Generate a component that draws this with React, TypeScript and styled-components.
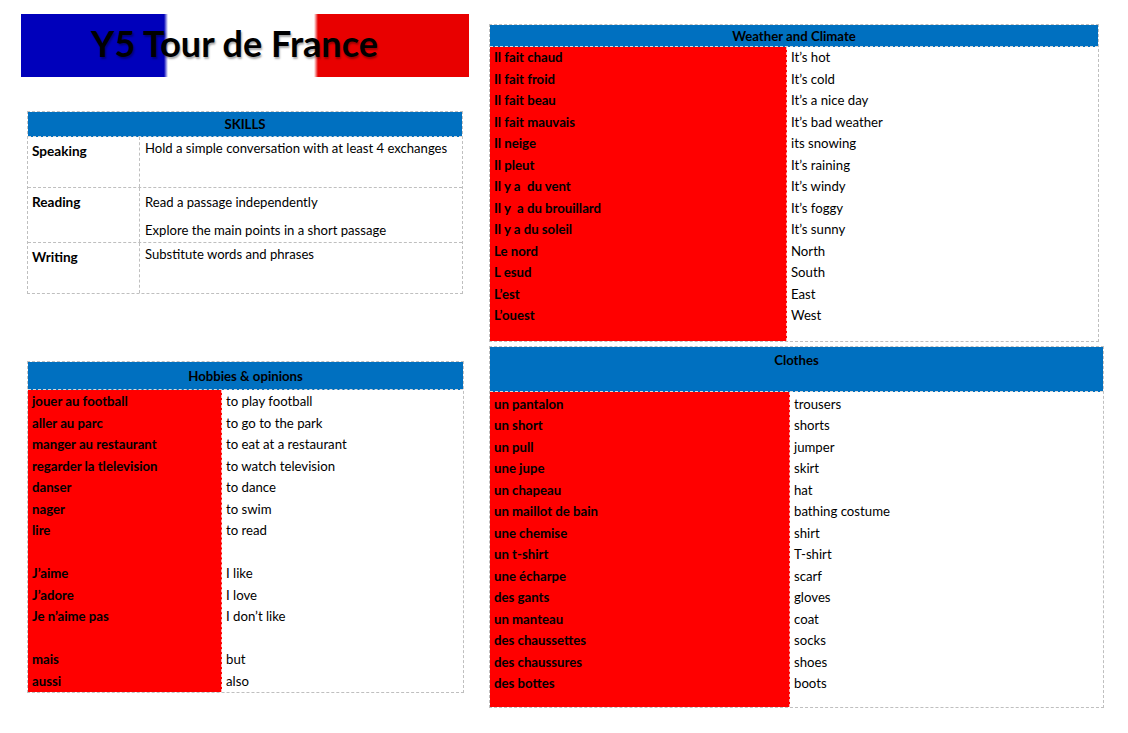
import React from 'react'
import styled, { createGlobalStyle } from 'styled-components'

const GlobalStyle = createGlobalStyle`
  body {
    margin: 0;
    background: #ffffff;
    font-family: Lato, 'Liberation Sans', sans-serif;
    color: #000000;
  }
`

const colors = {
  blue: '#0070c0',
  red: '#ff0000',
  border: '#bfbfbf',
  flagBlue: '#0000bb',
  flagRed: '#e80000'
}

type Pair = [string, string]

const hobbies: Pair[] = [
  ['jouer au football', 'to play football'],
  ['aller au parc', 'to go to the park'],
  ['manger au restaurant', 'to eat at a restaurant'],
  ['regarder la tlelevision', 'to watch television'],
  ['danser', 'to dance'],
  ['nager', 'to swim'],
  ['lire', 'to read'],
  ['', ''],
  ['J’aime', 'I like'],
  ['J’adore', 'I love'],
  ['Je n’aime pas', 'I don’t like'],
  ['', ''],
  ['mais', 'but'],
  ['aussi', 'also']
]

const weather: Pair[] = [
  ['Il fait chaud', 'It’s hot'],
  ['Il fait froid', 'It’s cold'],
  ['Il fait beau', 'It’s a nice day'],
  ['Il fait mauvais', 'It’s bad weather'],
  ['Il neige', 'its snowing'],
  ['Il pleut', 'It’s raining'],
  ['Il y a  du vent', 'It’s windy'],
  ['Il y  a du brouillard', 'It’s foggy'],
  ['Il y a du soleil', 'It’s sunny'],
  ['Le nord', 'North'],
  ['L esud', 'South'],
  ['L’est', 'East'],
  ['L’ouest', 'West']
]

const clothes: Pair[] = [
  ['un pantalon', 'trousers'],
  ['un short', 'shorts'],
  ['un pull', 'jumper'],
  ['une jupe', 'skirt'],
  ['un chapeau', 'hat'],
  ['un maillot de bain', 'bathing costume'],
  ['une chemise', 'shirt'],
  ['un t-shirt', 'T-shirt'],
  ['une écharpe', 'scarf'],
  ['des gants', 'gloves'],
  ['un manteau', 'coat'],
  ['des chaussettes', 'socks'],
  ['des chaussures', 'shoes'],
  ['des bottes', 'boots']
]

interface VocabTableProps {
  title: string
  rows: Pair[]
  width: number
  leftWidth: number
  headerHeight: number
  headerTop?: number
  bodyTop?: number
  bottomPad?: number
}

const VocabTable: React.FC<VocabTableProps> = ({ title, rows, width, leftWidth, headerHeight, headerTop, bodyTop = 0, bottomPad = 0 }) => (
  <S.Table $width={width}>
    <S.Header $height={headerHeight} $top={headerTop}>
      {title}
    </S.Header>
    <S.VocabBody $left={leftWidth}>
      <S.FrenchCol $top={bodyTop} $bottom={bottomPad}>
        {rows.map(([fr], i) => (
          <S.Cell key={`fr-${i}`}>{fr}</S.Cell>
        ))}
      </S.FrenchCol>
      <S.EnglishCol $top={bodyTop} $bottom={bottomPad}>
        {rows.map(([, en], i) => (
          <S.Cell key={`en-${i}`}>{en}</S.Cell>
        ))}
      </S.EnglishCol>
    </S.VocabBody>
  </S.Table>
)

export default function App() {
  return (
    <>
      <GlobalStyle />
      <S.Page>
        <S.LeftColumn>
          <S.Banner>
            <S.BannerTitle>Y5 Tour de France</S.BannerTitle>
          </S.Banner>

          <S.SkillsTable>
            <S.Header $height={25}>SKILLS</S.Header>
            <S.SkillRow $height={51}>
              <S.SkillLabel>Speaking</S.SkillLabel>
              <S.SkillText>
                <S.Para>Hold a simple conversation with at least 4 exchanges</S.Para>
              </S.SkillText>
            </S.SkillRow>
            <S.SkillRow $height={55}>
              <S.SkillLabel>Reading</S.SkillLabel>
              <S.SkillText $top={6}>
                <S.Para>Read a passage independently</S.Para>
                <S.Para $gap={12}>Explore the main points in a short passage</S.Para>
              </S.SkillText>
            </S.SkillRow>
            <S.SkillRow $height={50} $last>
              <S.SkillLabel>Writing</S.SkillLabel>
              <S.SkillText>
                <S.Para>Substitute words and phrases</S.Para>
              </S.SkillText>
            </S.SkillRow>
          </S.SkillsTable>

          <S.HobbiesWrap>
            <VocabTable title="Hobbies & opinions" rows={hobbies} width={437} leftWidth={194} headerHeight={28} bodyTop={1} />
          </S.HobbiesWrap>
        </S.LeftColumn>

        <S.RightColumn>
          <VocabTable title="Weather and Climate" rows={weather} width={610} leftWidth={297} headerHeight={22} bottomPad={14} />
          <S.ClothesWrap>
            <VocabTable title="Clothes" rows={clothes} width={615} leftWidth={300} headerHeight={45} headerTop={5} bodyTop={2} bottomPad={12} />
          </S.ClothesWrap>
        </S.RightColumn>
      </S.Page>
    </>
  )
}

export const S = {
  Page: styled.div`
    display: flex;
    align-items: flex-start;
    padding: 14px 0 0 21px;
    width: 1128px;
    height: 733px;
    box-sizing: border-box;
  `,
  LeftColumn: styled.div`
    width: 448px;
    display: flex;
    flex-direction: column;
  `,
  RightColumn: styled.div`
    margin-left: 20px;
    margin-top: 10px;
    display: flex;
    flex-direction: column;
  `,
  Banner: styled.div`
    height: 63px;
    display: flex;
    align-items: center;
    justify-content: center;
    padding-right: 21px;
    background: linear-gradient(
      to right,
      ${colors.flagBlue} 0,
      ${colors.flagBlue} 143px,
      #ffffff 147px,
      #ffffff 293px,
      ${colors.flagRed} 297px,
      ${colors.flagRed} 100%
    );
  `,
  BannerTitle: styled.span`
    font-family: Lato, 'Liberation Sans', sans-serif;
    font-weight: 700;
    font-size: 36px;
    line-height: 40px;
    color: #000000;
    text-shadow: 1px 2px 2px rgba(0, 0, 0, 0.35);
    margin-top: -5px;
  `,
  SkillsTable: styled.div`
    margin: 34px 0 0 6px;
    width: 436px;
    border: 1px dashed ${colors.border};
    box-sizing: border-box;
  `,
  SkillRow: styled.div<{ $height: number; $last?: boolean }>`
    display: grid;
    grid-template-columns: 112px 1fr;
    height: ${p => p.$height}px;
    border-bottom: ${p => (p.$last ? 'none' : `1px dashed ${colors.border}`)};
    box-sizing: border-box;
  `,
  SkillLabel: styled.div`
    border-right: 1px dashed ${colors.border};
    padding: 6px 0 0 4px;
    font-size: 13.6px;
    font-weight: 700;
    line-height: 16px;
  `,
  SkillText: styled.div<{ $top?: number }>`
    padding: ${p => p.$top ?? 3}px 0 0 5px;
    font-size: 13.1px;
    line-height: 16px;
  `,
  Para: styled.div<{ $gap?: number }>`
    margin-top: ${p => p.$gap ?? 0}px;
  `,
  HobbiesWrap: styled.div`
    margin: 67px 0 0 6px;
  `,
  ClothesWrap: styled.div`
    margin-top: 4px;
  `,
  Table: styled.div<{ $width: number }>`
    width: ${p => p.$width}px;
    border: 1px dashed ${colors.border};
    box-sizing: border-box;
  `,
  Header: styled.div<{ $height: number; $top?: number }>`
    height: ${p => p.$height}px;
    background: ${colors.blue};
    border-bottom: 1px dashed #d9d9d9;
    box-sizing: border-box;
    display: flex;
    justify-content: center;
    align-items: ${p => (p.$top !== undefined ? 'flex-start' : 'center')};
    padding-top: ${p => p.$top ?? 0}px;
    font-size: 13.2px;
    font-weight: 700;
    line-height: 16px;
  `,
  VocabBody: styled.div<{ $left: number }>`
    display: grid;
    grid-template-columns: ${p => p.$left}px 1fr;
  `,
  FrenchCol: styled.div<{ $top: number; $bottom: number }>`
    background: ${colors.red};
    border-right: 1px dashed #ffb3b3;
    padding: ${p => p.$top}px 0 ${p => p.$bottom}px 4px;
    font-weight: 700;
  `,
  EnglishCol: styled.div<{ $top: number; $bottom: number }>`
    padding: ${p => p.$top}px 0 ${p => p.$bottom}px 4px;
  `,
  Cell: styled.div`
    height: 21.5px;
    line-height: 21.5px;
    font-size: 13.2px;
    white-space: pre;
  `
}
